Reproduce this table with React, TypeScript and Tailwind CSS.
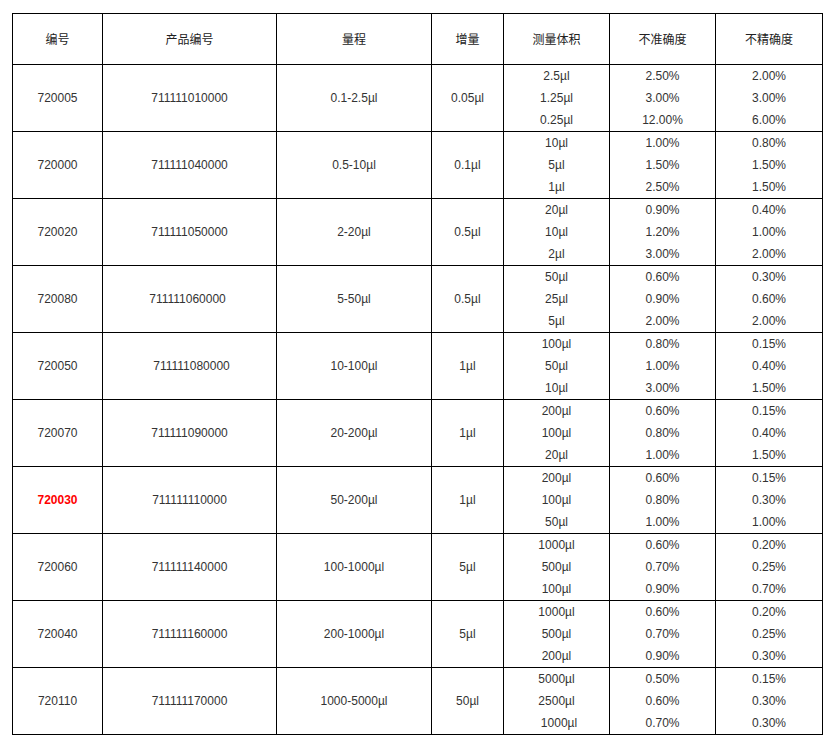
const headers = ["编号", "产品编号", "量程", "增量", "测量体积", "不准确度", "不精确度"];

const widths = ["w-[90px]", "w-[174px]", "w-[155px]", "w-[72px]", "w-[106px]", "w-[106px]", "w-[107px]"];

interface Row {
  code: string;
  product: string;
  range: string;
  step: string;
  volumes: string[];
  accuracy: string[];
  precision: string[];
  highlight?: boolean;
  productShift?: string;
  volumeShift?: string[];
}

const rows: Row[] = [
  { code: "720005", product: "711111010000", range: "0.1-2.5µl", step: "0.05µl", volumes: ["2.5µl", "1.25µl", "0.25µl"], accuracy: ["2.50%", "3.00%", "12.00%"], precision: ["2.00%", "3.00%", "6.00%"] },
  { code: "720000", product: "711111040000", range: "0.5-10µl", step: "0.1µl", volumes: ["10µl", "5µl", "1µl"], accuracy: ["1.00%", "1.50%", "2.50%"], precision: ["0.80%", "1.50%", "1.50%"] },
  { code: "720020", product: "711111050000", range: "2-20µl", step: "0.5µl", volumes: ["20µl", "10µl", "2µl"], accuracy: ["0.90%", "1.20%", "3.00%"], precision: ["0.40%", "1.00%", "2.00%"] },
  { code: "720080", product: "711111060000", range: "5-50µl", step: "0.5µl", volumes: ["50µl", "25µl", "5µl"], accuracy: ["0.60%", "0.90%", "2.00%"], precision: ["0.30%", "0.60%", "2.00%"], productShift: "pr-[4px]" },
  { code: "720050", product: "711111080000", range: "10-100µl", step: "1µl", volumes: ["100µl", "50µl", "10µl"], accuracy: ["0.80%", "1.00%", "3.00%"], precision: ["0.15%", "0.40%", "1.50%"], productShift: "pl-[4px]" },
  { code: "720070", product: "711111090000", range: "20-200µl", step: "1µl", volumes: ["200µl", "100µl", "20µl"], accuracy: ["0.60%", "0.80%", "1.00%"], precision: ["0.15%", "0.40%", "1.50%"] },
  { code: "720030", product: "711111110000", range: "50-200µl", step: "1µl", volumes: ["200µl", "100µl", "50µl"], accuracy: ["0.60%", "0.80%", "1.00%"], precision: ["0.15%", "0.30%", "1.00%"], highlight: true },
  { code: "720060", product: "711111140000", range: "100-1000µl", step: "5µl", volumes: ["1000µl", "500µl", "100µl"], accuracy: ["0.60%", "0.70%", "0.90%"], precision: ["0.20%", "0.25%", "0.70%"] },
  { code: "720040", product: "711111160000", range: "200-1000µl", step: "5µl", volumes: ["1000µl", "500µl", "200µl"], accuracy: ["0.60%", "0.70%", "0.90%"], precision: ["0.20%", "0.25%", "0.30%"] },
  { code: "720110", product: "711111170000", range: "1000-5000µl", step: "50µl", volumes: ["5000µl", "2500µl", "1000µl"], accuracy: ["0.50%", "0.60%", "0.70%"], precision: ["0.15%", "0.30%", "0.30%"], volumeShift: ["", "", "pl-[5px]"] },
];

const cell = "border border-black text-center align-middle p-0";

function Stack({ items, shifts }: { items: string[]; shifts?: string[] }) {
  return (
    <div className="flex flex-col">
      {items.map((v, i) => (
        <div key={i} className={`h-[22px] leading-[22px] ${shifts?.[i] ?? ""}`}>
          {v}
        </div>
      ))}
    </div>
  );
}

export default function App() {
  return (
    <div className="bg-white min-h-[743px] pt-[13px] pl-[12px]">
      <table
        className="border-collapse table-fixed w-[811px] text-[12px] text-[#333]"
        style={{ fontFamily: '"Liberation Sans", Arial, "Noto Sans CJK SC", sans-serif' }}
      >
        <colgroup>
          {widths.map((w, i) => (
            <col key={i} className={w} />
          ))}
        </colgroup>
        <thead>
          <tr className="h-[51px]">
            {headers.map((h) => (
              <th key={h} className={`${cell} font-normal text-[#222] pt-[2px]`}>
                {h}
              </th>
            ))}
          </tr>
        </thead>
        <tbody>
          {rows.map((r) => (
            <tr key={r.code}>
              <td className={`${cell} ${r.highlight ? "text-[#ff0000] font-bold" : ""}`}>{r.code}</td>
              <td className={cell}>
                <span className={r.productShift}>{r.product}</span>
              </td>
              <td className={cell}>{r.range}</td>
              <td className={cell}>{r.step}</td>
              <td className={cell}>
                <Stack items={r.volumes} shifts={r.volumeShift} />
              </td>
              <td className={cell}>
                <Stack items={r.accuracy} />
              </td>
              <td className={cell}>
                <Stack items={r.precision} />
              </td>
            </tr>
          ))}
        </tbody>
      </table>
    </div>
  );
}
